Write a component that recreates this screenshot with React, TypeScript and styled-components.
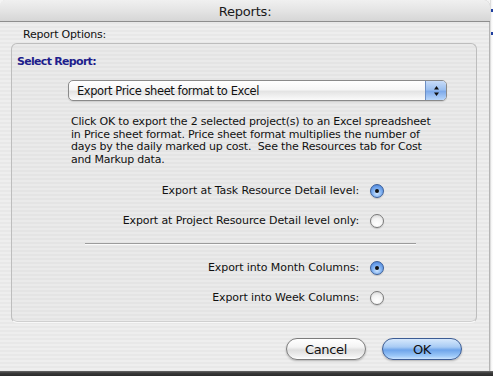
import React from "react";
import styled, { createGlobalStyle } from "styled-components";

const Global = createGlobalStyle`
  html, body { margin: 0; padding: 0; }
  body { background: #dcdcdc; font-family: "DejaVu Sans", "Liberation Sans", sans-serif; }
`;

const Page = styled.div`
  width: 493px;
  height: 376px;
  display: grid;
  grid-template-columns: 490px 3px;
  grid-template-rows: 371px 5px;
  overflow: hidden;
  background: #f4f4f4;
`;

const RightStrip = styled.div`
  background: linear-gradient(to right, #c8c8c8 0, #f2f2f2 1px, #ffffff 3px);
  display: flex;
  flex-direction: column;
  gap: 20px;
  padding-top: 9px;
`;

const StripMark = styled.div`
  height: 3px;
  background: #2040a0;
  margin-left: 1px;
`;

const BottomShadow = styled.div`
  grid-column: 1 / span 2;
  background: linear-gradient(to bottom, #6a6a6a 0, #3a3a3a 2px, #2a2a2a 5px);
`;

const Window = styled.div`
  display: flex;
  flex-direction: column;
  border-radius: 6px 6px 0 0;
  overflow: hidden;
  background: repeating-linear-gradient(
    to bottom,
    #eeeeee 0,
    #eeeeee 2px,
    #e8e8e8 2px,
    #e8e8e8 4px
  );
  box-shadow: inset -1px 0 0 #b4b4b4;
`;

const TitleBar = styled.div`
  height: 22px;
  box-sizing: border-box;
  border-bottom: 1px solid #8e8e8e;
  background: linear-gradient(to bottom, #f0f0f0 0%, #e4e4e4 50%, #d6d6d6 100%);
  display: flex;
  align-items: center;
  justify-content: center;
  font-size: 13px;
  letter-spacing: -0.2px;
  color: #1a1a1a;
  padding-top: 1px;
`;

const Body = styled.div`
  display: flex;
  flex-direction: column;
  padding: 5px 13px 0 11px;
`;

const GroupTitle = styled.div`
  margin-left: 12px;
  font-size: 11px;
  letter-spacing: -0.2px;
  line-height: 15px;
  height: 15px;
  color: #111;
`;

const GroupBox = styled.div`
  margin-top: 1px;
  height: 280px;
  box-sizing: border-box;
  border: 1px solid #bdbdbd;
  border-bottom-color: #f8f8f8;
  border-radius: 6px;
  box-shadow: inset 0 -1px 0 #d0d0d0;
  background: rgba(0, 0, 0, 0.015);
  display: flex;
  flex-direction: column;
  padding-top: 11px;
`;

const SectionLabel = styled.div`
  margin-left: 5px;
  font-size: 11px;
  font-weight: bold;
  letter-spacing: -0.7px;
  line-height: 14px;
  color: #1e1e8c;
`;

const Popup = styled.div`
  margin: 11px 0 0 56px;
  width: 379px;
  height: 21px;
  box-sizing: border-box;
  border: 1px solid #8a8a8a;
  border-radius: 5px;
  background: linear-gradient(to bottom, #ffffff 0%, #f6f6f6 45%, #e4e4e4 55%, #fafafa 100%);
  display: flex;
  align-items: stretch;
  overflow: hidden;
  box-shadow: 0 1px 1px rgba(0, 0, 0, 0.12);
`;

const PopupText = styled.div`
  flex: 1;
  display: flex;
  align-items: center;
  padding-left: 8px;
  font-size: 11.5px;
  letter-spacing: -0.42px;
  color: #111;
`;

const PopupArrows = styled.div`
  width: 20px;
  border-left: 1px solid #6d8fc4;
  background: linear-gradient(to bottom, #c8dcf8 0%, #9cc0f0 45%, #7eaaea 55%, #b8d6fa 100%);
  display: flex;
  align-items: center;
  justify-content: center;
`;

const Paragraph = styled.div`
  margin: 15px 0 0 59px;
  font-size: 11px;
  letter-spacing: -0.2px;
  line-height: 12.7px;
  color: #111;
  white-space: nowrap;
`;

const RadioRow = styled.div<{ $top: number }>`
  margin: ${(p) => p.$top}px 93px 0 0;
  height: 20px;
  display: flex;
  align-items: center;
  justify-content: flex-end;
  gap: 11px;
  font-size: 11px;
  letter-spacing: -0.1px;
  color: #111;
`;

const Radio = styled.div<{ $on?: boolean }>`
  width: 14px;
  height: 14px;
  margin-right: -1px;
  box-sizing: border-box;
  border-radius: 50%;
  border: 1px solid ${(p) => (p.$on ? "#3a5e98" : "#7a7a7a")};
  background: ${(p) =>
    p.$on
      ? "radial-gradient(circle at 50% 70%, #cfe6ff 0%, #7fb0f0 45%, #3d78d6 100%)"
      : "radial-gradient(circle at 50% 75%, #ffffff 0%, #f4f4f4 50%, #cfcfcf 100%)"};
  display: flex;
  align-items: center;
  justify-content: center;
  box-shadow: 0 1px 1px rgba(0, 0, 0, 0.15);
`;

const Dot = styled.div`
  width: 4px;
  height: 4px;
  border-radius: 50%;
  background: #111;
`;

const Separator = styled.div`
  margin: 12px 0 0 73px;
  width: 331px;
  height: 1px;
  background: #9c9c9c;
  border-bottom: 1px solid #fafafa;
`;

const ButtonBar = styled.div`
  display: flex;
  justify-content: flex-end;
  gap: 16px;
  padding: 15px 15px 0 0;
`;

const Button = styled.div<{ $primary?: boolean }>`
  width: 80px;
  height: 22px;
  box-sizing: border-box;
  border-radius: 11px;
  border: 1px solid ${(p) => (p.$primary ? "#3c5c94" : "#7c7c7c")};
  background: ${(p) =>
    p.$primary
      ? "linear-gradient(to bottom, #d6e8fc 0%, #a8cbf4 40%, #6ea4ea 55%, #9cc8f8 85%, #cce4ff 100%)"
      : "linear-gradient(to bottom, #ffffff 0%, #f4f4f4 40%, #dedede 55%, #f0f0f0 85%, #ffffff 100%)"};
  box-shadow: 0 1px 2px rgba(0, 0, 0, 0.25);
  display: flex;
  align-items: center;
  justify-content: center;
  font-size: 13px;
  letter-spacing: -0.3px;
  color: #111;
`;

const rows1 = [
  { label: "Export at Task Resource Detail level:", on: true, top: 14 },
  { label: "Export at Project Resource Detail level only:", on: false, top: 10 },
];
const rows2 = [
  { label: "Export into Month Columns:", on: true, top: 13 },
  { label: "Export into Week Columns:", on: false, top: 10 },
];

export default function App() {
  return (
    <>
      <Global />
      <Page>
        <Window>
          <TitleBar>Reports:</TitleBar>
          <Body>
            <GroupTitle>Report Options:</GroupTitle>
            <GroupBox>
              <SectionLabel>Select Report:</SectionLabel>
              <Popup>
                <PopupText>Export Price sheet format to Excel</PopupText>
                <PopupArrows>
                  <svg width="7" height="12" viewBox="0 0 7 12">
                    <path d="M3.5 1 L6 4.5 H1 Z" fill="#111" />
                    <path d="M3.5 11 L6 7.5 H1 Z" fill="#111" />
                  </svg>
                </PopupArrows>
              </Popup>
              <Paragraph>
                Click OK to export the 2 selected project(s) to an Excel spreadsheet
                <br />
                in Price sheet format. Price sheet format multiplies the number of
                <br />
                days by the daily marked up cost.&nbsp; See the Resources tab for Cost
                <br />
                and Markup data.
              </Paragraph>
              {rows1.map((r) => (
                <RadioRow key={r.label} $top={r.top}>
                  <span>{r.label}</span>
                  <Radio $on={r.on}>{r.on && <Dot />}</Radio>
                </RadioRow>
              ))}
              <Separator />
              {rows2.map((r) => (
                <RadioRow key={r.label} $top={r.top}>
                  <span>{r.label}</span>
                  <Radio $on={r.on}>{r.on && <Dot />}</Radio>
                </RadioRow>
              ))}
            </GroupBox>
            <ButtonBar>
              <Button>Cancel</Button>
              <Button $primary>OK</Button>
            </ButtonBar>
          </Body>
        </Window>
        <RightStrip>
          <StripMark />
          <StripMark />
        </RightStrip>
        <BottomShadow />
      </Page>
    </>
  );
}
